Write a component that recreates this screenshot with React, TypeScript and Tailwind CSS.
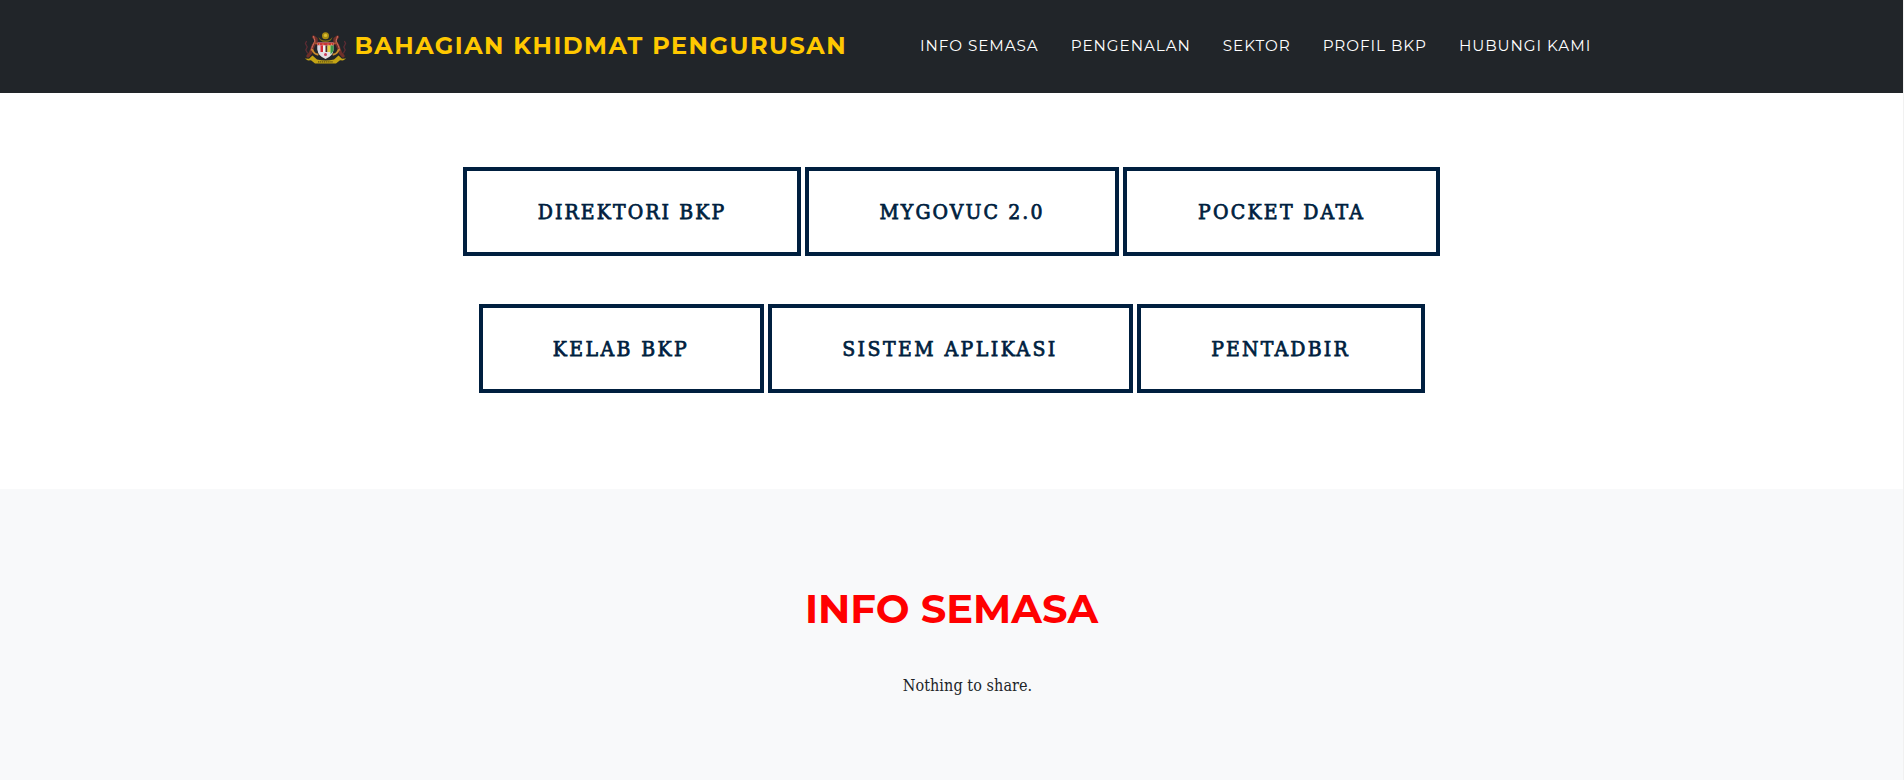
const NAV_ITEMS = [
  { label: "INFO SEMASA", href: "#info" },
  { label: "PENGENALAN", href: "#pengenalan" },
  { label: "SEKTOR", href: "#sektor" },
  { label: "PROFIL BKP", href: "#profil" },
  { label: "HUBUNGI KAMI", href: "#hubungi" },
];

const LINK_ROWS = [
  [
    { label: "DIREKTORI BKP", size: "w-[338px] tracking-[2.1px]" },
    { label: "MYGOVUC 2.0", size: "w-[314px] tracking-[2.1px]" },
    { label: "POCKET DATA", size: "w-[317px] tracking-[2.3px]" },
  ],
  [
    { label: "KELAB BKP", size: "w-[285px] tracking-[2.4px]" },
    { label: "SISTEM APLIKASI", size: "w-[365px] tracking-[2.45px]" },
    { label: "PENTADBIR", size: "w-[288px] tracking-[2.2px]" },
  ],
];

function Tiger() {
  return (
    <g fill="none" strokeLinecap="round" strokeLinejoin="round">
      <path d="M9.5 5 L12 7 L12 10 L9.5 13 L8 17 L6.5 21 L4 24" stroke="#6e3029" strokeWidth="3.4" />
      <path d="M9.5 4.5 L11 9 L8.5 14 L7 19" stroke="#c9685a" strokeWidth="1.2" strokeDasharray="1.6 1" />
      <path d="M11 11 L14 12" stroke="#a8552f" strokeWidth="1.8" />
      <path d="M8.5 18 Q10 22 13.5 22.5" stroke="#c98a2c" strokeWidth="2" />
      <path d="M3.5 21 L1.8 18 L3.2 15 L1.4 11.5 L2.4 9.5" stroke="#5c2c33" strokeWidth="1.3" />
    </g>
  );
}

function Crest() {
  return (
    <svg viewBox="0 0 43 32" className="h-8 w-[43px] shrink-0" aria-hidden="true">
      <Tiger />
      <g transform="translate(43 0) scale(-1 1)">
        <Tiger />
      </g>
      <circle cx="21.5" cy="3.8" r="3.5" fill="#a98c12" />
      <circle cx="21.5" cy="3.4" r="1.7" fill="#d9bd33" />
      <path d="M14.5 5 Q15.5 10 21.5 10 Q27.5 10 28.5 5 Q26 8.500 21.500 8.500 Q17 8.500 14.500 5 Z" fill="#7d6a16" />
      <path d="M13.500 10.500 H29.500 V18 Q29 24 21.500 27 Q14 24 13.500 18 Z" fill="#e4dfe0" />
      <path d="M13.500 10.500 H29.500 V13.500 H13.500 Z" fill="#c8343b" />
      <path d="M15.500 11.500 V13 M19 11.500 V13 M24 11.500 V13 M27.500 11.500 V13" stroke="#e2b04a" strokeWidth="0.8" />
      <path d="M13.500 13.500 H16.500 V21.800 Q13.500 20 13.500 17 Z" fill="#d6d8e6" />
      <path d="M16.500 13.500 H19 V20 H16.500 Z" fill="#d52b35" />
      <path d="M19 13.500 H21.500 V20 H19 Z" fill="#f2f2f2" />
      <path d="M21.500 13.500 H23.500 V20 H21.500 Z" fill="#4a2a2c" />
      <path d="M23.500 13.500 H26.500 V20 H23.500 Z" fill="#e3cf45" />
      <path d="M26.500 13.500 H29.500 V18 Q29.200 20.500 26.500 22.500 Z" fill="#3d9a46" />
      <circle cx="21.500" cy="22.500" r="1.500" fill="#cc3f5b" />
      <path
        d="M0.800 26.500 L5 26.800 L8.500 23.500 L13 27.500 Q21.500 29.500 30 27.500 L34.500 23.500 L38 26.800 L42.200 26.500 L39 28.500 L36 28.300 L32 31.500 L11 31.500 L7 28.300 L4 28.500 Z"
        fill="#c4a414"
      />
      <path d="M14 29.900 H29" stroke="#5f5214" strokeWidth="1.400" strokeDasharray="1.300 0.600" />
    </svg>
  );
}

export default function App() {
  return (
    <div className="min-h-[780px] border-r border-[#f1f1f1] bg-white text-[#212529]">
      <header className="flex h-[93px] items-start bg-[#212529] pl-[303.5px] pt-7 font-['Montserrat','Inter',sans-serif]">
        <a href="#top" className="flex h-9 w-[616.5px] shrink-0 items-center gap-2">
          <span className="pt-1">
            <Crest />
          </span>
          <span className="whitespace-nowrap text-2xl font-bold tracking-[1.5px] text-[#ffc800]">
            BAHAGIAN KHIDMAT PENGURUSAN
          </span>
        </a>
        <nav className="flex h-9 items-center gap-8 text-[15.2px] tracking-[0.95px] text-white">
          {NAV_ITEMS.map((item) => (
            <a key={item.label} href={item.href} className="whitespace-nowrap">
              {item.label}
            </a>
          ))}
        </nav>
      </header>

      <section className="flex h-[396px] flex-col items-center gap-12 pt-[74px]">
        {LINK_ROWS.map((row) => (
          <div key={row[0].label} className="flex gap-1">
            {row.map((link) => (
              <a
                key={link.label}
                href="#info"
                className={`flex h-[89px] items-center justify-center whitespace-nowrap border-4 border-[#001f3f] pt-0.5 font-['DejaVu_Serif_Condensed','DejaVu_Serif',serif] text-[21px] text-[#001f3f] [-webkit-text-stroke:0.75px_#001f3f] ${link.size}`}
              >
                {link.label}
              </a>
            ))}
          </div>
        ))}
      </section>

      <section id="info" className="flex h-[291px] flex-col items-center bg-[#f8f9fa] pt-24">
        <h2 className="font-['Montserrat','Inter',sans-serif] text-[40px] font-bold leading-12 text-[#ff0000]">
          INFO SEMASA
        </h2>
        <p className="mt-[41px] pl-8 font-['DejaVu_Serif_Condensed','DejaVu_Serif',serif] text-base leading-6 tracking-[0.08px]">
          Nothing to share.
        </p>
      </section>
    </div>
  );
}
